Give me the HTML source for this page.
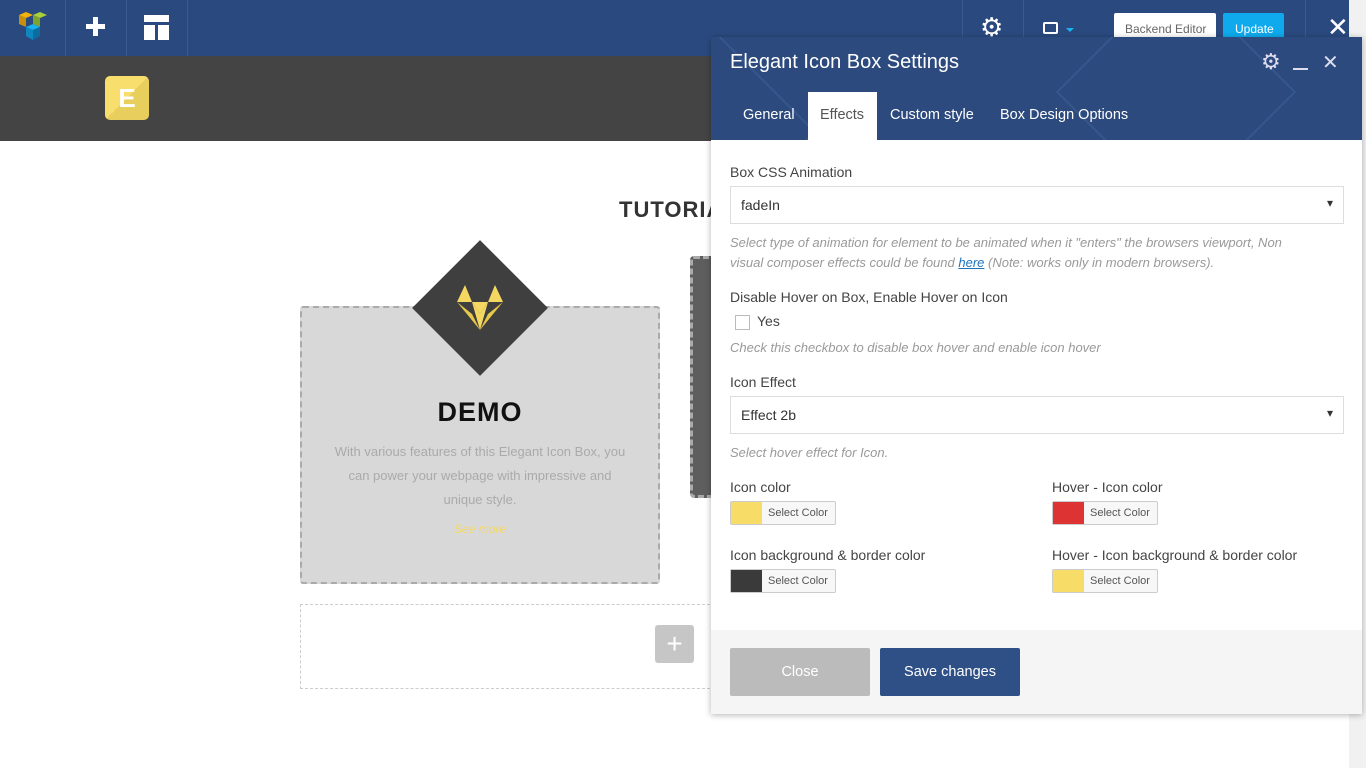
<!DOCTYPE html>
<html><head><meta charset="utf-8"><style>
*{box-sizing:border-box;margin:0;padding:0}
body{width:1366px;height:768px;overflow:hidden;position:relative;background:#fff;font-family:"Liberation Sans",sans-serif}
.a{position:absolute}
.top{left:0;top:0;width:1366px;height:56px;background:#2a4a7f}
.sep{top:0;width:1px;height:56px;background:#3b5a8e}
.dark{left:0;top:56px;width:1366px;height:85px;background:#444}
.lbl{font-size:14px;color:#444}
.help{font-size:13px;color:#999;font-style:italic;line-height:20px}
.sel{height:38px;border:1px solid #ddd;background:#fff;font-size:14px;color:#333;padding:10px 10px}
.sel:after{content:"▾";position:absolute;right:10px;top:9px;font-size:12px;color:#333}
.cp{height:24px;width:106px;border:1px solid #ccc;border-radius:2px;background:#f7f7f7;font-size:11px;color:#555}
.cp i{position:absolute;left:0;top:0;width:31px;height:22px}
.cp span{position:absolute;left:37px;top:5px}
</style></head><body>
<div class="a top"></div>
<div class="a sep" style="left:65px"></div><div class="a sep" style="left:126px"></div><div class="a sep" style="left:187px"></div>
<div class="a sep" style="left:962px"></div><div class="a sep" style="left:1023px"></div><div class="a sep" style="left:1305px"></div>
<svg class="a" style="left:18px;top:11px" width="30" height="32" viewBox="0 0 30 32"><path d="M1 4l7-3 7 3-7 3z" fill="#f7b20d"/><path d="M1 4v9l7 3V7z" fill="#c98e0a"/><path d="M15 4l7-3 7 3-7 3z" fill="#a9cf3a"/><path d="M15 4v9l7 3V7z" fill="#7ea22a"/><path d="M8 16l7-3 7 3-7 3z" fill="#18b2ef"/><path d="M8 16v9l7 4V19z" fill="#0f86c0"/><path d="M15 19v10l7-4v-9z" fill="#0c6e9e"/></svg>
<div class="a" style="left:86px;top:24px;width:19px;height:5px;background:#fff"></div><div class="a" style="left:93px;top:17px;width:5px;height:19px;background:#fff"></div>
<div class="a" style="left:144px;top:15px;width:25px;height:7px;background:#fff"></div><div class="a" style="left:144px;top:25px;width:11px;height:15px;background:#fff"></div><div class="a" style="left:158px;top:25px;width:11px;height:15px;background:#fff"></div>
<div class="a" style="left:980px;top:12px;color:#fff;font-size:26px">⚙</div>
<div class="a" style="left:1043px;top:22px;width:15px;height:12px;border:2px solid #fff;border-radius:2px"></div>
<div class="a" style="left:1066px;top:28px;border:4px solid transparent;border-top:4px solid #18b2ef"></div>
<div class="a" style="left:1114px;top:13px;width:102px;height:30px;background:#fff;border-radius:2px;font-size:12px;color:#666;padding:9px 0 0 11px">Backend Editor</div>
<div class="a" style="left:1223px;top:13px;width:61px;height:30px;background:#0eaaed;border-radius:2px;font-size:12px;color:#fff;padding:9px 0 0 12px">Update</div>
<div class="a" style="left:1327px;top:12px;color:#fff;font-size:26px">✕</div>
<div class="a dark"></div>
<div class="a" style="left:105px;top:76px;width:44px;height:44px;border-radius:5px;background:linear-gradient(135deg,#f8de6c 50%,#e8ce5c 50%);color:#fff;font-weight:bold;font-size:26px;text-align:center;line-height:44px">E</div>
<div class="a" style="left:619px;top:197px;font-size:22px;font-weight:bold;color:#333;letter-spacing:1px">TUTORIAL</div>
<div class="a" style="left:300px;top:306px;width:360px;height:278px;background:#d8d8d8;border:2px dashed #aaa;border-radius:3px"></div>
<div class="a" style="left:690px;top:256px;width:30px;height:242px;background:#5e5e5e;border:3px dashed #aaa;border-radius:4px;border-right:none"></div>
<div class="a" style="left:432px;top:260px;width:96px;height:96px;background:#3f3f3f;transform:rotate(45deg)"></div>
<svg class="a" style="left:455px;top:285px" width="50" height="46" viewBox="0 0 50 46"><path d="M10 0l7 17H2z" fill="#f5d862"/><path d="M40 0l8 17H33z" fill="#f5d862"/><path d="M17 17h16l-8 12z" fill="#f5d862"/><path d="M2 17l23 28-8-16z" fill="#e8c84a"/><path d="M48 17L25 45l8-16z" fill="#e8c84a"/><path d="M17 17l8 12 8-12 -8 28z" fill="#f5d862"/></svg>
<div class="a" style="left:300px;top:397px;width:360px;text-align:center;font-size:27px;font-weight:bold;color:#111;letter-spacing:1px">DEMO</div>
<div class="a" style="left:300px;top:440px;width:360px;text-align:center;font-size:13px;color:#aaa;line-height:24px">With various features of this Elegant Icon Box, you<br>can power your webpage with impressive and<br>unique style.</div>
<div class="a" style="left:300px;top:522px;width:360px;text-align:center;font-size:12px;font-style:italic;color:#f5d862">See more</div>
<div class="a" style="left:300px;top:604px;width:420px;height:85px;border:1px dashed #ccc"></div>
<div class="a" style="left:655px;top:625px;width:39px;height:38px;background:#c6c6c6;border-radius:3px;color:#fff;font-size:28px;text-align:center;line-height:37px">+</div>
<div class="a" style="left:1349px;top:0;width:17px;height:768px;background:#f1f1f1"></div>
<div class="a" style="left:711px;top:37px;width:651px;height:677px;background:#fff;box-shadow:0 1px 6px rgba(0,0,0,.3)">
 <div class="a" style="left:0;top:0;width:651px;height:103px;background:#2c4a7e;overflow:hidden">
  <div class="a" style="left:380px;top:-30px;width:170px;height:170px;border:2px solid #36578c;transform:rotate(45deg)"></div>
  <div class="a" style="left:-100px;top:10px;width:170px;height:170px;border:2px solid #36578c;transform:rotate(45deg)"></div>
 </div>
 <div class="a" style="left:19px;top:14px;font-size:20px;color:#fff">Elegant Icon Box Settings</div>
 <div class="a" style="left:550px;top:12px;font-size:22px;color:#dde">⚙</div>
 <div class="a" style="left:582px;top:31px;width:15px;height:2px;background:#dde"></div>
 <div class="a" style="left:611px;top:13px;font-size:20px;color:#dde">✕</div>
 <div class="a" style="left:32px;top:70px;font-size:14.5px;color:#fff">General</div>
 <div class="a" style="left:97px;top:55px;width:69px;height:48px;background:#fff;font-size:14.5px;color:#555;padding:15px 0 0 12px">Effects</div>
 <div class="a" style="left:179px;top:70px;font-size:14.5px;color:#fff">Custom style</div>
 <div class="a" style="left:289px;top:70px;font-size:14.5px;color:#fff">Box Design Options</div>
 <div class="a lbl" style="left:19px;top:127px">Box CSS Animation</div>
 <div class="a sel" style="left:19px;top:149px;width:614px">fadeIn</div>
 <div class="a help" style="left:19px;top:196px;width:570px">Select type of animation for element to be animated when it "enters" the browsers viewport, Non visual composer effects could be found <u style="color:#1e73be">here</u> (Note: works only in modern browsers).</div>
 <div class="a lbl" style="left:19px;top:252px">Disable Hover on Box, Enable Hover on Icon</div>
 <div class="a" style="left:24px;top:278px;width:15px;height:15px;border:1px solid #bbb"></div>
 <div class="a lbl" style="left:46px;top:276px">Yes</div>
 <div class="a help" style="left:19px;top:301px">Check this checkbox to disable box hover and enable icon hover</div>
 <div class="a lbl" style="left:19px;top:337px">Icon Effect</div>
 <div class="a sel" style="left:19px;top:359px;width:614px">Effect 2b</div>
 <div class="a help" style="left:19px;top:406px">Select hover effect for Icon.</div>
 <div class="a lbl" style="left:19px;top:442px">Icon color</div>
 <div class="a cp" style="left:19px;top:464px"><i style="background:#f7dc67"></i><span>Select Color</span></div>
 <div class="a lbl" style="left:341px;top:442px">Hover - Icon color</div>
 <div class="a cp" style="left:341px;top:464px"><i style="background:#dd3333"></i><span>Select Color</span></div>
 <div class="a lbl" style="left:19px;top:510px">Icon background &amp; border color</div>
 <div class="a cp" style="left:19px;top:532px"><i style="background:#3a3a3a"></i><span>Select Color</span></div>
 <div class="a lbl" style="left:341px;top:510px">Hover - Icon background &amp; border color</div>
 <div class="a cp" style="left:341px;top:532px"><i style="background:#f7dc67"></i><span>Select Color</span></div>
 <div class="a" style="left:0;top:593px;width:651px;height:84px;background:#f5f5f5"></div>
 <div class="a" style="left:19px;top:611px;width:140px;height:48px;background:#bbb;border-radius:2px;color:#fff;font-size:14.5px;text-align:center;line-height:48px">Close</div>
 <div class="a" style="left:169px;top:611px;width:140px;height:48px;background:#2e5086;border-radius:2px;color:#fff;font-size:14.5px;text-align:center;line-height:48px">Save changes</div>
</div>
</body></html>
